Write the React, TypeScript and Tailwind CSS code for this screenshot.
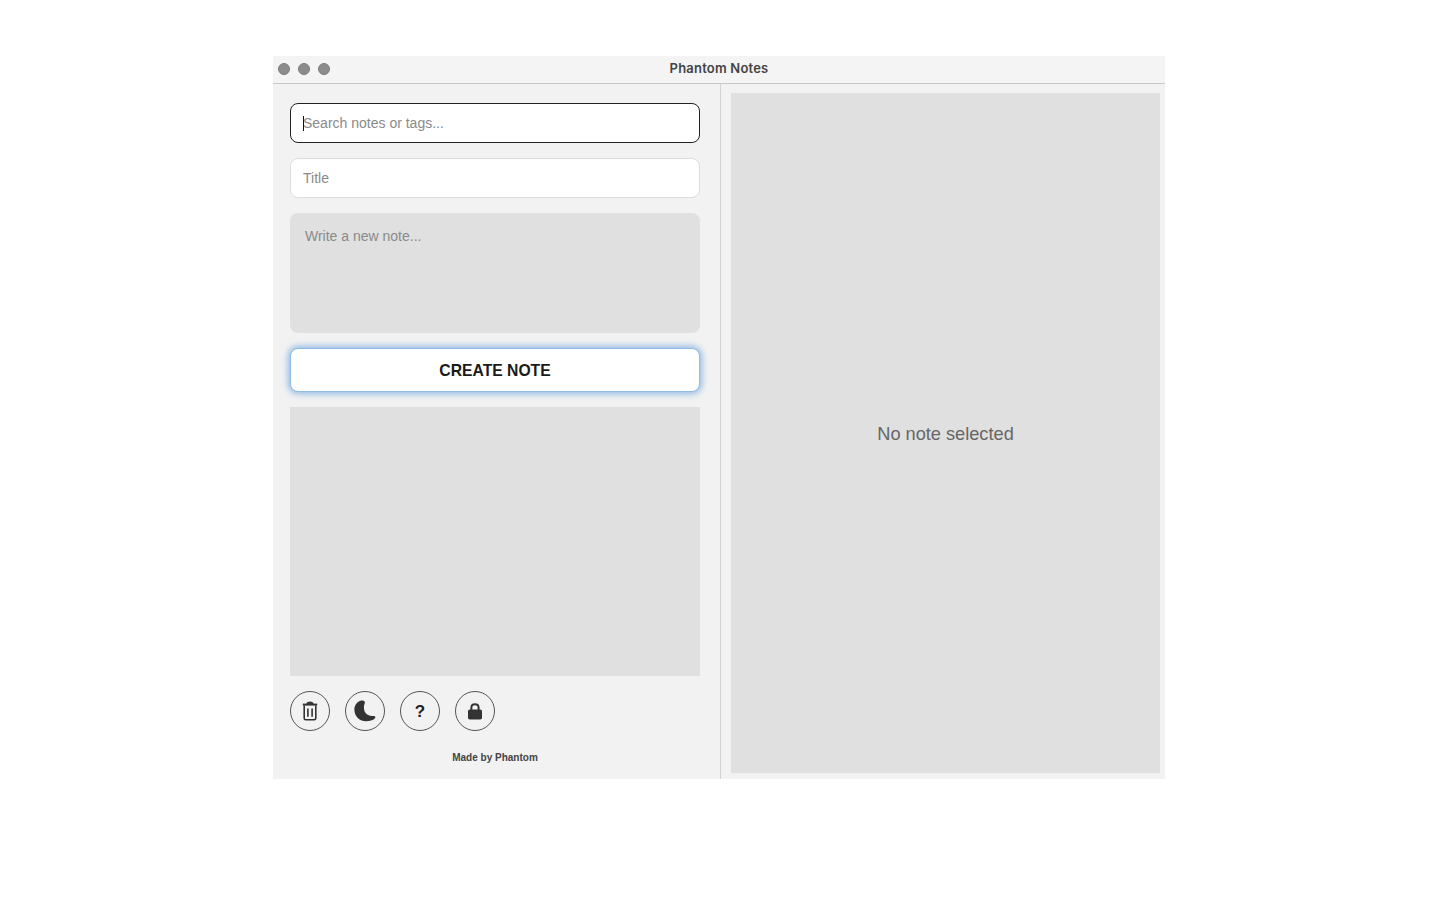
const sans = 'font-["Liberation_Sans",Arial,sans-serif]';

function TrashIcon() {
  return (
    <svg width="16" height="20" viewBox="0 0 16 20" fill="none" stroke="#333" strokeWidth="1.6">
      <path d="M4.8 2.6 C4.8 0.6 11.2 0.6 11.2 2.6 Z" fill="#333" strokeWidth="1" />
      <path d="M0.8 3.6 H15.2" strokeWidth="2" />
      <path d="M2.2 4.5 V17.2 C2.2 18.2 2.8 18.8 3.8 18.8 H12.2 C13.2 18.8 13.8 18.2 13.8 17.2 V4.5" />
      <path d="M5.9 7.5 V15.8 M10.1 7.5 V15.8" />
    </svg>
  );
}

function MoonIcon() {
  return (
    <svg width="22" height="22" viewBox="0 0 22 22" fill="#333">
      <path d="M7.2 0.6 C3 1.6 0.2 5.4 0.4 10.2 C0.7 16.6 5.8 21.2 12 21.2 C15.6 21.2 19 20.2 20.8 18.4 C21.8 17.4 21.3 16 20 16 C15.4 16.2 11.6 14.6 10.4 10.8 C9.5 7.8 10 5 10.8 3 C11.4 1.2 9.6 0 7.2 0.6 Z" />
    </svg>
  );
}

function LockIcon() {
  return (
    <svg width="14" height="17" viewBox="0 0 14 17" fill="none">
      <path d="M3.4 7 V4.6 C3.4 2.4 5 1.2 7 1.2 C9 1.2 10.6 2.4 10.6 4.6 V7" stroke="#333" strokeWidth="2" />
      <rect x="0" y="6.4" width="14" height="10.2" rx="1.8" fill="#333" />
    </svg>
  );
}

function RoundButton({ children }: { children: React.ReactNode }) {
  return (
    <button className="w-10 h-10 rounded-full border border-[#555] flex items-center justify-center">
      {children}
    </button>
  );
}

export default function App() {
  return (
    <div className="min-h-[900px] bg-white pt-14 pl-[273px]">
      <div className={`relative w-[892px] h-[723px] bg-[#f2f2f2] flex flex-col ${sans}`}>
        {/* stray corner pixels from the window capture */}
        <span className="absolute left-0 top-0 w-px h-px bg-[#333]"></span>
        <span className="absolute right-0 top-0 w-px h-px bg-[#999]"></span>
        <div className="relative h-7 shrink-0 bg-[#f4f4f4] border-b border-[#c8c8c8] flex items-center justify-center">
          <div className="absolute left-[5px] top-[7px] flex gap-2">
            <span className="w-3 h-3 rounded-full bg-[#8c8c8c] border border-[#7c7c7c]"></span>
            <span className="w-3 h-3 rounded-full bg-[#8c8c8c] border border-[#7c7c7c]"></span>
            <span className="w-3 h-3 rounded-full bg-[#8c8c8c] border border-[#7c7c7c]"></span>
          </div>
          <span className="-mt-px font-['Inter',sans-serif] text-[13px] tracking-[0.2px] font-semibold text-[#444]">Phantom Notes</span>
        </div>

        <div className="flex flex-1 min-h-0">
          <div className="w-[448px] shrink-0 border-r border-[#d2d2d2] pt-[19px] pl-[17px] flex flex-col">
            <div className="relative w-[410px]">
              <input
                placeholder="Search notes or tags..."
                className="w-full h-10 px-3 bg-white border border-[#222] rounded-lg text-sm outline-none placeholder:text-[#8a8a8a]"
              />
              <span className="absolute left-[13px] top-[13px] w-px h-[15px] bg-[#111]"></span>
            </div>
            <input
              placeholder="Title"
              className="mt-[15px] w-[410px] h-10 px-3 bg-white border border-[#dcdcdc] rounded-lg text-sm outline-none placeholder:text-[#8a8a8a]"
            />
            <textarea
              placeholder="Write a new note..."
              className="mt-[15px] w-[410px] h-[120px] px-[15px] py-[13px] bg-[#e0e0e0] rounded-lg text-sm resize-none outline-none placeholder:text-[#8a8a8a]"
            ></textarea>
            <button className="mt-[15px] w-[410px] h-11 pt-px bg-white rounded-lg border border-[#8fbde6] shadow-[0_0_6px_2px_rgba(80,150,220,0.6)] text-[15.7px] font-bold text-[#1a1a1a]">
              CREATE NOTE
            </button>
            <div className="mt-[15px] w-[410px] h-[269px] bg-[#e0e0e0]"></div>
            <div className="mt-[15px] flex gap-[15px]">
              <RoundButton><TrashIcon /></RoundButton>
              <RoundButton><MoonIcon /></RoundButton>
              <RoundButton><span className="pt-0.5 text-[17px] font-bold text-[#222]">?</span></RoundButton>
              <RoundButton><LockIcon /></RoundButton>
            </div>
            <div className="mt-[19px] w-[410px] text-center text-[10px] font-bold text-[#444]">Made by Phantom</div>
          </div>

          <div className="flex-1 pt-[9px] pl-[10px] pr-[5px] pb-[6px]">
            <div className="h-full bg-[#e0e0e0] flex items-center justify-center">
              <span className="mt-1 text-[18.2px] text-[#666]">No note selected</span>
            </div>
          </div>
        </div>
      </div>
    </div>
  );
}
